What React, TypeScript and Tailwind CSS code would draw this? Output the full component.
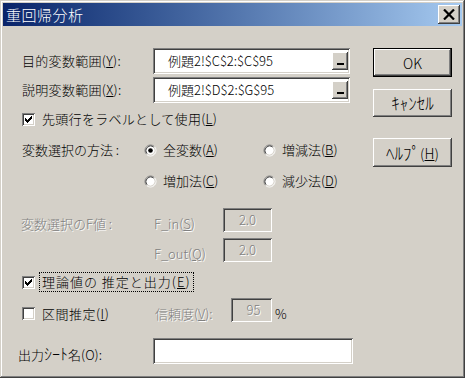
import React from "react";

const raised =
  "shadow-[inset_-1px_-1px_0_#404040,inset_1px_1px_0_#ffffff,inset_-2px_-2px_0_#808080,inset_2px_2px_0_#d4d0c8]";
const sunken =
  "shadow-[inset_1px_1px_0_#808080,inset_-1px_-1px_0_#ffffff,inset_2px_2px_0_#404040,inset_-2px_-2px_0_#d4d0c8]";
const dis = "text-[#808080] [text-shadow:1px_1px_0_#ffffff]";

function Check({ checked }: { checked?: boolean }) {
  return (
    <span className={`w-[13px] h-[13px] bg-white ${sunken} shrink-0 flex items-center justify-center`}>
      {checked && (
        <svg width="7" height="7" viewBox="0 0 7 7" shapeRendering="crispEdges">
          <rect x="0" y="2" width="1" height="3" fill="#000" />
          <rect x="1" y="3" width="1" height="3" fill="#000" />
          <rect x="2" y="4" width="1" height="3" fill="#000" />
          <rect x="3" y="3" width="1" height="3" fill="#000" />
          <rect x="4" y="2" width="1" height="3" fill="#000" />
          <rect x="5" y="1" width="1" height="3" fill="#000" />
          <rect x="6" y="0" width="1" height="3" fill="#000" />
        </svg>
      )}
    </span>
  );
}

function Radio({ checked }: { checked?: boolean }) {
  return (
    <svg width="13" height="13" viewBox="0 0 13 13" className="shrink-0">
      <circle cx="6.5" cy="6.5" r="5" fill="#ffffff" />
      <path d="M2.61 10.39 A5.5 5.5 0 0 1 10.39 2.61" stroke="#808080" fill="none" />
      <path d="M10.39 2.61 A5.5 5.5 0 0 1 2.61 10.39" stroke="#ffffff" fill="none" />
      <path d="M3.32 9.68 A4.5 4.5 0 0 1 9.68 3.32" stroke="#404040" fill="none" />
      <path d="M9.68 3.32 A4.5 4.5 0 0 1 3.32 9.68" stroke="#d4d0c8" fill="none" />
      {checked && <circle cx="6.5" cy="6.5" r="2.3" fill="#000" />}
    </svg>
  );
}

function RangeInput({ value }: { value: string }) {
  return (
    <div className={`w-[197px] h-[26px] bg-white ${sunken} flex items-center justify-between pl-[15px] pr-[2px]`}>
      <span className="text-[13px] leading-[16px]">{value}</span>
      <div className={`w-[16px] h-[18px] bg-[#d4d0c8] ${raised} flex flex-col items-center justify-end pb-[5px]`}>
        <div className="w-[7px] h-[2px] bg-black" />
      </div>
    </div>
  );
}

function Btn({ children, def, h, size }: { children: React.ReactNode; def?: boolean; h: string; size: string }) {
  return (
    <div className={`w-[79px] ${h} ${def ? "border border-black" : ""} flex`}>
      <div className={`flex-1 ${raised} flex items-center justify-center ${size} leading-[18px]`}>{children}</div>
    </div>
  );
}

export default function App() {
  return (
    <div
      className={`w-[465px] h-[378px] bg-[#d4d0c8] shadow-[inset_-1px_-1px_0_#404040,inset_1px_1px_0_#d4d0c8,inset_-2px_-2px_0_#808080,inset_2px_2px_0_#ffffff] flex flex-col text-black font-['Noto_Sans_CJK_JP',sans-serif] font-light overflow-hidden`}
    >
      <div className="mx-[3px] mt-[3px] h-[23px] bg-gradient-to-r from-[#0a246a] to-[#a6caf0] flex items-center justify-between pl-[3px] pr-[2px]">
        <span className="text-white text-[15px] leading-[18px] tracking-[0.5px]">重回帰分析</span>
        <div className={`w-[22px] h-[19px] bg-[#d4d0c8] ${raised} flex items-center justify-center`}>
          <svg width="12" height="11" viewBox="0 0 12 11">
            <path d="M1 0.5 L11 10.5 M11 0.5 L1 10.5" stroke="#000" strokeWidth="2.2" />
          </svg>
        </div>
      </div>

      <div className="flex flex-1">
        <div className="flex flex-col w-[360px] text-[13px] leading-[16px]">
          <div className="mt-[22px] h-[26px] flex items-center">
            <span className="ml-[22px] w-[131px] tracking-[0.3px]">
              目的変数範囲(<u>Y</u>):
            </span>
            <RangeInput value="例題2!$C$2:$C$95" />
          </div>
          <div className="mt-[3px] h-[26px] flex items-center">
            <span className="ml-[22px] w-[131px] tracking-[0.3px]">
              説明変数範囲(<u>X</u>):
            </span>
            <RangeInput value="例題2!$D$2:$G$95" />
          </div>
          <div className="mt-[8px] h-[16px] flex items-center">
            <span className="ml-[22px]">
              <Check checked />
            </span>
            <span className="ml-[7px] tracking-[0.3px]">
              先頭行をラベルとして使用(<u>L</u>)
            </span>
          </div>
          <div className="mt-[15px] h-[16px] flex items-center">
            <span className="ml-[22px] w-[122px]">変数選択の方法 :</span>
            <div className="w-[119px] flex items-center gap-[6px]">
              <Radio checked />
              <span>
                全変数(<u>A</u>)
              </span>
            </div>
            <div className="flex items-center gap-[6px]">
              <Radio />
              <span>
                増減法(<u>B</u>)
              </span>
            </div>
          </div>
          <div className="mt-[15px] h-[16px] flex items-center">
            <div className="ml-[144px] w-[119px] flex items-center gap-[6px]">
              <Radio />
              <span>
                増加法(<u>C</u>)
              </span>
            </div>
            <div className="flex items-center gap-[6px]">
              <Radio />
              <span>
                減少法(<u>D</u>)
              </span>
            </div>
          </div>
          <div className="mt-[19px] h-[24px] flex items-end">
            <span className={`ml-[21px] w-[133px] ${dis}`}>変数選択のF値 :</span>
            <span className={`w-[69px] ${dis}`}>
              F_in(<u>S</u>)
            </span>
            <div className={`w-[49px] h-[24px] self-start ${sunken} flex items-center justify-center ${dis}`}>2.0</div>
          </div>
          <div className="mt-[6px] h-[24px] flex items-end">
            <span className={`ml-[154px] w-[69px] ${dis}`}>
              F_out(<u>Q</u>)
            </span>
            <div className={`w-[49px] h-[24px] self-start ${sunken} flex items-center justify-center ${dis}`}>2.0</div>
          </div>
          <div className="mt-[10px] h-[20px] flex items-center">
            <span className="ml-[22px]">
              <Check checked />
            </span>
            <span className="ml-[4px] px-[3px] h-[20px] flex items-center tracking-[1px] outline outline-1 outline-dotted outline-black -outline-offset-1">
              理論値の 推定と出力(<u>E</u>)
            </span>
          </div>
          <div className="mt-[6px] h-[24px] flex items-end">
            <span className="ml-[22px] mb-[2px]">
              <Check />
            </span>
            <span className="ml-[7px] w-[113px] tracking-[0.5px]">
              区間推定(<u>I</u>)
            </span>
            <span className={`w-[76px] ${dis}`}>
              信頼度(<u>V</u>):
            </span>
            <div className={`w-[41px] h-[24px] self-start ${sunken} flex items-center justify-center pl-[4px] ${dis}`}>95</div>
            <span className="ml-[3px]">%</span>
          </div>
          <div className="mt-[16px] h-[26px] flex items-end">
            <span className="ml-[18px] w-[135px] mb-[1px]">
              出力<span className="text-[16px]">ｼｰﾄ</span>名(O):
            </span>
            <div className={`w-[200px] h-[26px] bg-white ${sunken}`} />
          </div>
        </div>

        <div className="ml-auto mr-[13px] flex flex-col">
          <div className="mt-[22px]">
            <Btn def h="h-[29px]" size="text-[14px]">
              OK
            </Btn>
          </div>
          <div className="mt-[12px]">
            <Btn h="h-[28px]" size="text-[17px]">
              ｷｬﾝｾﾙ
            </Btn>
          </div>
          <div className="mt-[21px]">
            <Btn h="h-[29px]" size="text-[14px]">
              <span className="text-[17px]">ﾍﾙﾌﾟ</span>(<u>H</u>)
            </Btn>
          </div>
        </div>
      </div>
    </div>
  );
}
